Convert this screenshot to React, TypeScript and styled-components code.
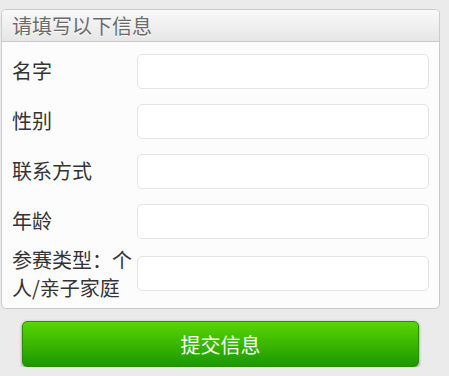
import React from 'react';
import styled, { createGlobalStyle } from 'styled-components';

// Local Variables
const GlobalStyle = createGlobalStyle`
  html, body {
    margin: 0;
    padding: 0;
    background: #ebebeb;
  }

  body {
    font-family: "Noto Sans CJK SC", "Liberation Sans", sans-serif;
  }
`;

const Page = styled.div`
  padding: 9px 9px 0 1px;
  width: 449px;
  box-sizing: border-box;
`;

const Panel = styled.section`
  width: 439px;
  box-sizing: border-box;
  background: #fcfcfc;
  border: 1px solid #cbcbcb;
  border-radius: 5px;
  overflow: hidden;
`;

const PanelHeader = styled.h2`
  margin: 0;
  height: 32px;
  box-sizing: border-box;
  padding: 0 10px;
  background: linear-gradient(#f9f9f9, #e6e6e6);
  border-bottom: 1px solid #c8c8c8;
  color: #6b6b6b;
  font-size: 20px;
  font-weight: 400;
  line-height: 31px;
  text-shadow: 0 1px 0 #fff;
`;

const PanelBody = styled.div`
  padding: 4px 10px 7px 10px;
`;

const FieldRow = styled.label`
  display: grid;
  grid-template-columns: 125px 1fr;
  align-items: center;
  min-height: 50px;
`;

const FieldLabel = styled.span`
  color: #333;
  font-size: 20px;
  line-height: 27.5px;
  line-break: anywhere;
`;

const TextInput = styled.input`
  display: block;
  width: 100%;
  height: 35px;
  box-sizing: border-box;
  margin: 0;
  padding: 0 8px;
  background: #fff;
  border: 1px solid #e4e4e4;
  border-radius: 5px;
  font: inherit;
  font-size: 16px;
  outline: none;
`;

const SubmitButton = styled.button`
  display: block;
  width: 397px;
  height: 46px;
  margin: 12px 0 0 21px;
  box-sizing: border-box;
  background: linear-gradient(#58d600, #1c9800);
  border: 1px solid #2a8c00;
  border-radius: 5px;
  box-shadow: 0 1px 3px rgba(0, 0, 0, 0.45);
  color: #fff;
  font-family: inherit;
  font-size: 20px;
  line-height: 44px;
  cursor: pointer;
`;

const fields = ['名字', '性别', '联系方式', '年龄', '参赛类型：个人/亲子家庭'];

// Component Definition
const App: React.FC = () => {
  return (
    <>
      <GlobalStyle />
      <Page>
        <Panel>
          <PanelHeader>请填写以下信息</PanelHeader>

          <PanelBody>
            {fields.map((field) => (
              <FieldRow key={field}>
                <FieldLabel>{field}</FieldLabel>
                <TextInput type="text" />
              </FieldRow>
            ))}
          </PanelBody>
        </Panel>

        <SubmitButton type="button">提交信息</SubmitButton>
      </Page>
    </>
  );
};

export default App;
